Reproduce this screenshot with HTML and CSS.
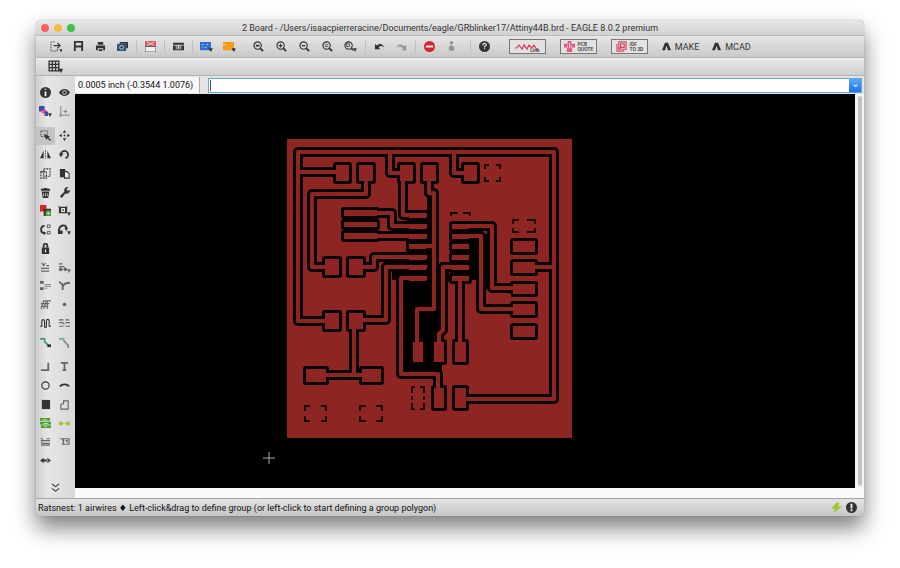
FILE: index.html
```html
<!DOCTYPE html>
<html lang="en">
<head>
    <meta charset="UTF-8">
    <meta name="viewport" content="width=device-width, initial-scale=1.0">
    <title>2 Board - EAGLE 8.0.2 premium</title>
    <link rel="stylesheet" href="styles.css">
</head>
<body>
    <div class="window">
        <header class="titlebar">
            <div class="lights">
                <button class="light close" aria-label="Close"></button>
                <button class="light minimize" aria-label="Minimize"></button>
                <button class="light expand" aria-label="Zoom window"></button>
            </div>
            <h1>2 Board - /Users/isaacpierreracine/Documents/eagle/GRblinker17/Attiny44B.brd - EAGLE 8.0.2 premium</h1>
        </header>

        <nav class="toolbar" aria-label="Actions">
            <div class="group">
                <button aria-label="Open"><svg viewBox="0 0 14 12"><path class="line thin dots" d="M5 1H1v10h7V8"/><path class="line" d="M4 5h7M8 2l3 3-3 3"/><path d="M10 9h4l-2 3z"/></svg></button>
                <button aria-label="Save"><svg viewBox="0 0 12 12"><path class="line bold" d="M2 11V1h8v10M2 6h8"/></svg></button>
                <button aria-label="Print"><svg viewBox="0 0 12 12"><path d="M3 1h6v3H3zM1 5h10v5H9V8H3v2H1zM4 9h4v2H4z"/></svg></button>
                <button aria-label="CAM processor"><svg viewBox="0 0 12 12"><path d="M3 1h9v7h-2V3H3z"/><rect class="navy" y="3" width="10" height="8" rx="1"/><circle class="ring" cx="5" cy="7" r="2"/></svg></button>
            </div>
            <div class="group divided">
                <button aria-label="Schematic"><svg viewBox="0 0 12 12"><path class="pink" d="M0 0h12v6H0z"/><path class="paper line thin" d="M0 6v6h12V6z"/><path class="line white thin" d="M2 1l8 4M10 1L2 5"/></svg></button>
            </div>
            <div class="group divided">
                <button aria-label="Library"><svg viewBox="0 0 12 12"><path d="M0 2h12v2H0zM0 5h3v4H0zM4 5h1v4H4zM7 5h1v4H7zM9 5h3v4H9zM0 9h12v1H0z"/></svg></button>
            </div>
            <div class="group big divided">
                <button aria-label="Script"><svg viewBox="0 0 14 12"><path class="blue" d="M0 1h12v9H0z"/><path class="line white thin" d="M2 4h2M7 4h2M2 7h1M5 7h2"/><path d="M9 8h5l-2 4z"/></svg></button>
                <button aria-label="User program"><svg viewBox="0 0 14 12"><path class="orange" d="M0 1h12v9H0z"/><path class="line white thin" d="M0 4h3M8 8h3"/><path d="M9 8h5l-2 4z"/></svg></button>
            </div>
            <div class="group big">
                <button aria-label="Zoom to fit"><svg viewBox="0 0 12 12"><circle class="line" cx="5" cy="5" r="4"/><path class="line bold" d="M8 8l3 3M3 5h4"/></svg></button>
                <button aria-label="Zoom in"><svg viewBox="0 0 12 12"><circle class="line" cx="5" cy="5" r="4"/><path class="line bold" d="M8 8l3 3"/><path class="line" d="M3 5h4M5 3v4"/></svg></button>
                <button aria-label="Zoom out"><svg viewBox="0 0 12 12"><circle class="line" cx="5" cy="5" r="4"/><path class="line bold" d="M8 8l3 3"/><path class="line" d="M3 5h4"/></svg></button>
                <button aria-label="Redraw"><svg viewBox="0 0 12 12"><circle class="line" cx="5" cy="5" r="4"/><path class="line bold" d="M8 8l3 3"/><path class="line thin" d="M3 4h4M3 6h4"/></svg></button>
                <button aria-label="Zoom select"><svg viewBox="0 0 14 12"><circle class="line" cx="5" cy="5" r="4"/><path class="line bold" d="M8 8l2 2"/><path class="line thin" d="M3 3h3v3H3z"/><path d="M10 8h4l-2 4z"/></svg></button>
            </div>
            <div class="group divided">
                <button aria-label="Undo"><svg viewBox="0 0 12 12"><path d="M1 3v6h6L5 7c2-2 4-2 6 0C10 3 6 2 3 5z"/></svg></button>
                <button aria-label="Redo" disabled><svg viewBox="0 0 12 12"><path d="M11 4v6H6l2-2C6 6 4 5 1 7c1-4 5-4 8-1z"/></svg></button>
            </div>
            <div class="group divided">
                <button aria-label="Stop"><svg viewBox="0 0 12 12"><circle class="red" cx="6" cy="6" r="6"/><path class="line white bold" d="M2 6h8"/></svg></button>
                <button aria-label="Go" disabled><svg viewBox="0 0 12 12"><circle cx="6" cy="8" r="3"/><circle cx="6" cy="2" r="2"/></svg></button>
            </div>
            <div class="group help divided">
                <button aria-label="Help"><svg viewBox="0 0 12 12"><circle cx="6" cy="6" r="6"/><path class="line white" d="M4 5c0-3 4-3 4-1 0 1-2 1-2 3M6 8v1"/></svg></button>
            </div>
            <div class="links">
                <a class="badge" href="#designlink"><svg class="wave" viewBox="0 0 24 8"><path class="line crimson" d="M0 5h2l2-3 3 4 2-4 3 4 2-4 3 3 2-3 3 5"/></svg><span class="lower">Link</span></a>
                <a class="badge" href="#quote"><svg viewBox="0 0 12 12"><path class="rose" d="M4 0h4v3h4v4H9v5H3V7H0V3h4z"/><path class="line white thin" d="M4 4v4M6 2v6M8 4v4"/></svg><span>PCB<br>QUOTE</span></a>
                <a class="badge" href="#idf"><svg viewBox="0 0 12 12"><path class="line crimson" d="M3 1h8v8H3zM1 3v8h8M5 3h4v4H5zM3 9l3-3"/></svg><span>IDF<br>TO 3D</span></a>
                <a class="make" href="#make"><svg viewBox="0 0 12 12"><path d="M0 11L4 1h4l4 10H8L6 5 4 11z"/></svg>MAKE</a>
                <a class="make" href="#mcad"><svg viewBox="0 0 12 12"><path d="M0 11L4 1h4l4 10H8L6 5 4 11z"/></svg>MCAD</a>
            </div>
        </nav>

        <div class="parameters">
            <button aria-label="Grid"><svg viewBox="0 0 14 12"><path class="line" d="M1 1h9v9H1zM4 1v9M7 1v9M1 4h9M1 7h9"/><path d="M9 8h5l-2 4z"/></svg></button>
        </div>

        <div class="workspace">
            <aside class="sidebar" aria-label="Commands">
                <div class="tools two">
                    <button aria-label="Info"><svg viewBox="0 0 12 12"><circle cx="6" cy="6" r="6"/><path class="line white bold" d="M6 2v1M6 5v5"/></svg></button>
                    <button aria-label="Show"><svg viewBox="0 0 12 12"><path d="M0 6c3-5 9-5 12 0-3 5-9 5-12 0z"/><circle class="ring" cx="6" cy="6" r="2"/></svg></button>
                    <button aria-label="Display"><svg viewBox="0 0 14 12"><path class="indigo" d="M0 0h6v6H0z"/><path class="rose" d="M3 4h5v4H3z"/><path class="indigo" d="M6 6h4v5H6z"/><path d="M10 8h4l-2 4z"/></svg></button>
                    <button class="faded" aria-label="Mark"><svg viewBox="0 0 12 12"><path class="line thin" d="M2 0v12M0 10h12M5 6h4M7 4v4"/></svg></button>
                </div>
                <div class="tools twelve">
                    <button class="active" aria-label="Group"><svg viewBox="0 0 12 12"><path class="line thin dots" d="M1 1h7v6H1z"/><path d="M4 4l7 3-2 1 3 3-1 1-3-3-1 2z"/></svg></button>
                    <button aria-label="Move"><svg viewBox="0 0 12 12"><path d="M6 0l2 3H4zM6 12l2-3H4zM0 6l3-2v4zM12 6L9 4v4z"/><circle cx="6" cy="6" r="1"/></svg></button>
                    <button aria-label="Mirror"><svg viewBox="0 0 12 12"><path d="M4 2v8H0zM8 2v8h4z"/><path class="line thin dots" d="M6 1v10"/></svg></button>
                    <button aria-label="Rotate"><svg viewBox="0 0 12 12"><path class="line bold" d="M2 7a4 4 0 1 1 5 3"/><path d="M0 5h5L2 9z"/></svg></button>
                    <button aria-label="Copy"><svg viewBox="0 0 12 12"><path class="line dots" d="M4 1h7v8H4zM1 4h6v7H1z"/></svg></button>
                    <button aria-label="Paste"><svg viewBox="0 0 12 12"><path d="M1 1h6v9H1z"/><path class="line paper" d="M6 4h3l2 2v5H6z"/></svg></button>
                    <button aria-label="Delete"><svg viewBox="0 0 12 12"><path d="M1 2h3V1h4v1h3v2H1zM2 5h8l-1 7H3z"/><path class="line white thin" d="M4 7v3M6 7v3M8 7v3"/></svg></button>
                    <button aria-label="Change"><svg viewBox="0 0 12 12"><path d="M1 10l5-5c-1-3 1-5 4-5L8 3l2 1 2-1c0 3-2 5-5 4l-4 5z"/></svg></button>
                    <button aria-label="Replace"><svg viewBox="0 0 12 12"><path class="red" d="M0 0h7v7H0z"/><path d="M4 4h8v8H4z"/><path class="green" d="M6 6h6v6H6z"/><path class="line white thin" d="M7 9h4M9 7v4"/></svg></button>
                    <button aria-label="Smash"><svg viewBox="0 0 14 12"><path d="M1 2h9v7H1z"/><path class="line white" d="M4 4h3v3H4z"/><path class="line thin" d="M0 1l2 2M10 1L9 2"/><path d="M10 8h4l-2 4z"/></svg></button>
                    <button aria-label="Gate swap"><svg viewBox="0 0 12 12"><path class="line bold" d="M5 2c-5 0-5 8 0 8"/><path d="M4 8v4l3-2z"/><path class="line thin" d="M8 1h3v3H8zM8 8h3v3H8z"/></svg></button>
                    <button aria-label="Name"><svg viewBox="0 0 14 12"><path class="line bold" d="M1 8c0-8 9-8 8-3"/><path d="M0 7h5v4H0zM7 4h4L9 8zM10 8h4l-2 4z"/></svg></button>
                    <button class="first" aria-label="Lock"><svg viewBox="0 0 12 12"><path class="line bold" d="M4 5V3c0-3 4-3 4 0v2"/><path d="M2 5h8v7H2z"/><path class="line white" d="M6 7v3"/></svg></button>
                    <button class="faded first" aria-label="Value"><svg viewBox="0 0 12 12"><path class="line" d="M2 1l2 3 2-3M1 7h9M1 10h9M7 4h3"/></svg></button>
                    <button class="faded" aria-label="Attribute"><svg viewBox="0 0 14 12"><path class="line" d="M1 2h4M1 5h6"/><circle cx="3" cy="8" r="2"/><circle cx="8" cy="8" r="2"/><path d="M10 8h4l-2 4z"/></svg></button>
                    <button class="faded" aria-label="Miter"><svg viewBox="0 0 12 12"><path d="M0 1h4v3H0zM0 8h4v3H0z"/><path class="line thin" d="M5 5h7M5 7h7M5 9h3"/></svg></button>
                    <button class="faded" aria-label="Split"><svg viewBox="0 0 12 12"><path class="line bold" d="M0 2l4 3v6M4 7c1-3 3-4 8-4"/></svg></button>
                    <button class="faded" aria-label="Optimize"><svg viewBox="0 0 12 12"><path class="line" d="M1 11L4 2h8M4 11l3-9M1 5h9M1 8h8M8 3v8"/></svg></button>
                    <button class="faded" aria-label="Via"><svg viewBox="0 0 12 12"><circle cx="6" cy="6" r="2"/></svg></button>
                    <button aria-label="Meander"><svg viewBox="0 0 12 12"><path class="line" d="M0 9h2V4c0-3 3-3 3 0v5c0 2 2 2 2 0V3c0-2 3-2 3 0v6h2"/></svg></button>
                    <button class="faded" aria-label="Differential pair"><svg viewBox="0 0 12 12"><path class="line" d="M0 2h5M7 2h4M0 5h4l2 2M7 5h5M0 9h5M7 9h5"/></svg></button>
                    <button aria-label="Route"><svg viewBox="0 0 12 12"><path class="line bold teal" d="M0 2h5v3l4 4"/><path d="M8 8h4v3H8z"/></svg></button>
                    <button class="faded" aria-label="Ripup"><svg viewBox="0 0 12 12"><path class="line bold teal" d="M0 2h5v2"/><path class="line" d="M5 4l5 5v3"/></svg></button>
                </div>
                <div class="tools six">
                    <button class="faded" aria-label="Line"><svg viewBox="0 0 12 12"><path class="line bold" d="M1 10h8V2"/></svg></button>
                    <button class="faded" aria-label="Text"><svg viewBox="0 0 12 12"><path class="line bold" d="M2 2h8M6 2v9M4 10h4"/></svg></button>
                    <button aria-label="Circle"><svg viewBox="0 0 12 12"><circle class="line" cx="6" cy="6" r="4"/></svg></button>
                    <button aria-label="Arc"><svg viewBox="0 0 12 12"><path class="line bold" d="M1 7c2-3 8-3 10 0"/></svg></button>
                    <button aria-label="Rectangle"><svg viewBox="0 0 12 12"><path d="M2 1h9v10H2z"/></svg></button>
                    <button class="faded" aria-label="Polygon"><svg viewBox="0 0 12 12"><path class="line" d="M2 11V6l3-1V2h5v9z"/></svg></button>
                    <button aria-label="Ratsnest"><svg viewBox="0 0 12 12"><path class="green" d="M0 0h11v3H0zM0 4h12v3H0zM1 8h11v3H1z"/><path class="line white thin" d="M3 2h5M4 6h5M4 9h4"/></svg></button>
                    <button aria-label="Autorouter"><svg viewBox="0 0 12 12"><path class="line lime thin" d="M1 6h10"/><path class="lime-fill" d="M0 4h4v4H0zM8 4h4v4H8z"/></svg></button>
                    <button class="faded" aria-label="Design rules"><svg viewBox="0 0 12 12"><path class="line" d="M1 2l2 2M1 5h10M3 8h7v2H2V6M7 3h4"/></svg></button>
                    <button class="faded" aria-label="Errors"><svg viewBox="0 0 12 12"><path class="line" d="M1 3h3l1 6H3M5 3h6v6H5zM7 5h2v2"/></svg></button>
                    <button aria-label="Dimension"><svg viewBox="0 0 12 12"><path d="M0 6l4-3v6zM12 6L8 3v6zM3 5h6v2H3z"/></svg></button>
                </div>
                <button class="more" aria-label="More commands"><svg viewBox="0 0 12 12"><path class="line" d="M2 2l4 3 4-3M2 7l4 3 4-3"/></svg></button>
            </aside>

            <main class="editor">
                <form class="command">
                    <label for="command">0.0005 inch (-0.3544 1.0076)</label>
                    <div class="combo">
                        <input type="text" id="command" name="command" autocomplete="off">
                        <button type="button" aria-label="Command history"><svg viewBox="0 0 12 12"><path class="line white" d="M4 5l2 2 2-2"/></svg></button>
                    </div>
                </form>

                <div class="view">
                    <svg class="board" viewBox="75 94 780 394" role="img" aria-label="Board layout">
                        <defs>
                            <!-- signals, drawn once as clearance and once as copper -->
                            <g id="tracks">
                                <path d="M460 399H554V152H298V321H332M298 172H342M554 267H523M390 152V173H406M454 152V173H470"/>
                                <path d="M366 180V194H312V267H332"/>
                                <path d="M355 267H374V257H427"/>
                                <path d="M403 180V215H427"/>
                                <path d="M360 213H392V226H427M360 236H427"/>
                                <path d="M427 267H386V320H355M354 320V375H316M354 375H371"/>
                                <path d="M427 278H401V374H438V397"/>
                                <path d="M429 180V193H434V309H417V350M434 246H410"/>
                                <path d="M453 226H492V288H523M453 236H481V309H523"/>
                                <path d="M460 267H443V330L439 334V350M460 278V352"/>
                            </g>
                            <g id="pads">
                                <path d="M336 165h13v16h-13zM359 165h14v16h-14zM400 165h13v16h-13zM423 165h13v16h-13zM464 165h13v16h-13z"/>
                                <path d="M325 259h14v16h-14zM349 259h14v16h-14zM325 313h14v16h-14zM349 313h14v16h-14z"/>
                                <path d="M344 210h33v6h-33zM344 222h33v5h-33zM344 233h33v6h-33z"/>
                                <path d="M513 241h22v11h-22zM513 262h22v11h-22zM513 284h22v10h-22zM513 304h22v11h-22zM513 326h22v11h-22z"/>
                                <path d="M306 369h20v13h-20zM362 369h19v13h-19z"/>
                                <path d="M413 342h10v20h-10zM434 342h10v20h-10zM455 342h11v20h-11zM434 388h10v20h-10zM455 388h11v20h-11z"/>
                                <path d="M409 213h17v5h-17zM409 224h17v5h-17zM409 234h17v5h-17zM409 244h17v5h-17zM409 255h17v5h-17zM409 265h17v5h-17zM409 276h17v5h-17z"/>
                                <path d="M452 224h17v5h-17zM452 234h17v5h-17zM452 244h17v5h-17zM452 255h17v5h-17zM452 265h17v5h-17zM452 276h17v5h-17z"/>
                            </g>
                        </defs>
                        <rect class="copper" x="287" y="139" width="285" height="299"/>
                        <path class="gap" d="M406 219H433V371H404V280H392V272H406zM427 190h5v120h-5zM436 264h13v18h-7v89h-10v-60h4zM450 222h21v12h17v51h-10v-5h-28zM484 234h6v55h-6z"/>
                        <use class="clearance" href="#tracks"/>
                        <use class="clearance pad" href="#pads"/>
                        <use class="track" href="#tracks"/>
                        <use class="copper" href="#pads"/>
                        <path class="copper" d="M380 221h5v7h-5zM487 294h24v8h-24z"/>
                        <!-- thermal corners of the unconnected pads -->
                        <path class="thermal" d="M485 169v-4h4M496 165h4v4M500 177v4h-4M489 181h-4v-4M451 216v-3h7M463 213h7v3M513 224v-4h6M527 220h8v4M535 228v4h-8M519 232h-6v-4M305 411v-5h5M321 406h5v5M326 416v5h-5M310 421h-5v-5M360 411v-5h6M376 406h6v5M382 416v5h-6M366 421h-6v-5M412 393v-6h3M420 387h4v6M424 403v6h-4M415 409h-3v-6M412 396v4M424 396v4"/>
                        <path class="origin" d="M263 458h12M269 452v12"/>
                    </svg>
                    <div class="scrollbar"></div>
                </div>
                <div class="scrollbar-bottom"></div>
            </main>
        </div>

        <footer class="status">
            <p>Ratsnest: 1 airwires <span class="diamond">♦</span> Left-click&amp;drag to define group (or left-click to start defining a group polygon)</p>
            <svg viewBox="0 0 12 12"><path class="lime-fill" d="M7 0L0 7h4l-1 5 9-7H8l1-4z"/></svg>
            <svg viewBox="0 0 12 12"><circle cx="6" cy="6" r="6"/><path class="line white bold" d="M6 2v5M6 8v2"/></svg>
        </footer>
    </div>
</body>
</html>
```
FILE: styles.css
```css
* {
    box-sizing: border-box;
}
body {
    margin: 0;
    min-height: 100vh;
    padding: 20px 36px 52px;
    display: flex;
    background: #fff;
    color: #111;
    font-family: Roboto, "Liberation Sans", sans-serif;
    font-size: 9px;
}
button {
    padding: 0;
    border: 0;
    background: none;
    font: inherit;
    color: inherit;
    display: flex;
    align-items: center;
    justify-content: center;
}
button svg,
a svg,
.status svg {
    height: 11px;
    flex: none;
    display: block;
    fill: #333;
}

/* Icon strokes and fills */
.line {
    fill: none;
    stroke: #333;
    stroke-width: 1.2;
}
.bold { stroke-width: 2; }
.thin { stroke-width: 0.8; }
.dots { stroke-dasharray: 2 1; }
.white { stroke: #eee; }
.crimson { stroke: #d9405c; }
.teal { stroke: #3fa178; }
.lime { stroke: #b4cf45; }
.ring { fill: #333; stroke: #ddd; }
.paper { fill: #eee; }
.navy { fill: #29567f; }
.blue { fill: #2f6fd0; }
.indigo { fill: #4048a8; }
.orange { fill: #f49b1c; }
.red { fill: #d8222f; }
.pink { fill: #dd5a6d; }
.rose { fill: #e7557a; }
.green { fill: #4aa02c; }
.lime-fill { fill: #a2c62b; }

.window {
    flex: 1;
    min-width: 0;
    display: flex;
    flex-direction: column;
    background: #ddd;
    border-radius: 5px;
    overflow: hidden;
    box-shadow: 0 0 1px rgba(0, 0, 0, 0.5), 0 12px 22px rgba(0, 0, 0, 0.5);
}

.titlebar {
    height: 16px;
    display: grid;
    grid-template-columns: 46px 1fr 46px;
    align-items: center;
    background: linear-gradient(#e8e8e8, #d2d2d2);
    border-bottom: 1px solid #bdbdbd;
}
.titlebar h1 {
    margin: 0;
    font-size: 9px;
    font-weight: 400;
    text-align: center;
    white-space: nowrap;
    color: #333;
}
.lights {
    display: flex;
    gap: 5px;
    padding-left: 5px;
}
.light {
    width: 8px;
    height: 8px;
    border-radius: 50%;
}
.close { background: #f9605a; }
.minimize { background: #f5bd3f; }
.expand { background: #3fc04b; }

.toolbar {
    height: 22px;
    padding-left: 9px;
    display: flex;
    align-items: center;
    gap: 6px;
    background: linear-gradient(#e6e6e6, #c9c9c9);
    border-bottom: 1px solid #b5b5b5;
}
.group {
    display: flex;
    position: relative;
}
.group button {
    width: 22px;
    height: 18px;
}
.group.big button {
    width: 23px;
}
.group.help {
    margin: 0 8px 0 5px;
}
.divided::before {
    content: "";
    position: absolute;
    left: -3px;
    top: 2px;
    bottom: 2px;
    border-left: 1px solid #c0c0c0;
}
button:disabled svg {
    opacity: 0.4;
}
.links {
    display: flex;
    gap: 14px;
}
.links a {
    width: 37px;
    height: 15px;
    display: flex;
    align-items: center;
    justify-content: center;
    gap: 3px;
    color: #333;
    text-decoration: none;
}
.links .badge {
    border: 1px solid #777;
    background: #e2e2e2;
    font-size: 5px;
    line-height: 5px;
    font-weight: 500;
}
.links .wave {
    height: 8px;
    margin-right: -12px;
}
.links .lower {
    align-self: flex-end;
}
.links .make {
    font-size: 9px;
    font-weight: 400;
    gap: 4px;
}
.links .make svg {
    height: 9px;
}

.parameters {
    height: 18px;
    padding-left: 12px;
    display: flex;
    align-items: center;
    background: linear-gradient(#e9e9e9, #cfcfcf);
    border-bottom: 1px solid #b5b5b5;
}
.parameters svg {
    height: 13px;
}

.workspace {
    flex: 1;
    display: flex;
}
.sidebar {
    width: 39px;
    padding-top: 7px;
    display: flex;
    flex-direction: column;
    gap: 6px;
    background: linear-gradient(90deg, #cfcfcf, #e6e6e6 30%, #d8d8d8);
}
.tools {
    display: grid;
    grid-template-columns: 19px 19px;
    grid-auto-rows: 1fr;
    min-height: 0;
}
.two { flex: 2; }
.twelve { flex: 12; }
.six { flex: 6; }
.tools .first {
    grid-column: 1;
}
.tools .active {
    background: #c4c4c4;
}
.faded svg {
    opacity: 0.7;
}
.more {
    height: 22px;
}

.editor {
    flex: 1;
    min-width: 0;
    display: flex;
    flex-direction: column;
}
.command {
    height: 18px;
    margin: 0;
    padding: 0 2px 0 0;
    display: flex;
    align-items: center;
    background: #e4e4e4;
}
.command label {
    width: 125px;
    padding-left: 3px;
    line-height: 16px;
    background: #f8f8f8;
    border-right: 1px solid #aaa;
    white-space: nowrap;
    font-size: 9px;
}
.combo {
    flex: 1;
    height: 15px;
    margin-left: 8px;
    display: flex;
    border: 1px solid #64a7df;
    background: #fff;
}
.combo input {
    flex: 1;
    min-width: 0;
    margin: 1px;
    padding: 0 1px;
    border: 0;
    border-left: 1px solid #555;
    outline: none;
    background: #fff;
    font: inherit;
}
.combo button {
    width: 12px;
    background: linear-gradient(#5aa9f7, #1c74ea);
}
.view {
    flex: 1;
    display: flex;
    min-height: 0;
    background: #000;
}
.board {
    flex: 1;
    min-width: 0;
    height: 100%;
    display: block;
}
.scrollbar {
    width: 9px;
    padding: 2px;
    background: #f5f5f5;
}
.scrollbar::before {
    content: "";
    display: block;
    height: 100%;
    margin-left: 1px;
    border-radius: 2px;
    background: #c2c2c2;
}
.scrollbar-bottom {
    height: 10px;
    background: #fafafa;
}

/* Board layers */
.copper {
    fill: #8d2522;
}
.gap {
    fill: #000;
}
.clearance {
    fill: none;
    stroke: #080000;
    stroke-width: 10;
    stroke-linejoin: round;
}
.clearance.pad {
    stroke-width: 6;
}
.track {
    fill: none;
    stroke: #8d2522;
    stroke-width: 4;
    stroke-linejoin: round;
}
.thermal {
    fill: none;
    stroke: #1c0303;
    stroke-width: 2;
}
.origin {
    stroke: #aaa;
    stroke-width: 1;
}

.status {
    height: 18px;
    padding: 0 7px 0 2px;
    display: flex;
    align-items: center;
    gap: 4px;
    background: linear-gradient(#e3e3e3, #c6c6c6);
    border-top: 1px solid #a5a5a5;
}
.status p {
    flex: 1;
    margin: 0;
    white-space: nowrap;
}
.diamond {
    font-family: "DejaVu Sans", sans-serif;
}
```
